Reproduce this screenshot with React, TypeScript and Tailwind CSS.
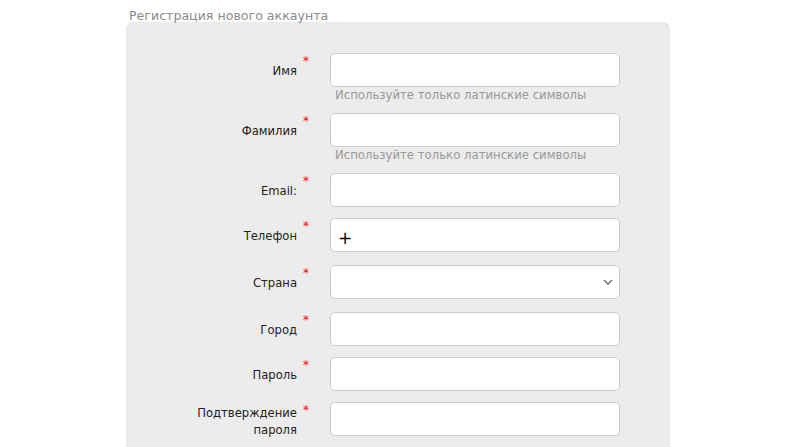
import React from 'react';

type Field = {
  label: React.ReactNode;
  hint?: string;
  kind?: 'text' | 'phone' | 'select';
  extra?: boolean;
};

const fields: Field[] = [
  { label: 'Имя', hint: 'Используйте только латинские символы' },
  { label: 'Фамилия', hint: 'Используйте только латинские символы' },
  { label: 'Email:' },
  { label: 'Телефон', kind: 'phone', extra: true },
  { label: 'Страна', kind: 'select', extra: true },
  { label: 'Город' },
  { label: 'Пароль' },
  {
    label: (
      <>
        Подтверждение
        <br />
        пароля
      </>
    ),
  },
];

const inputBox =
  'h-[34px] w-[290px] rounded-[5px] border border-[#cccccc] bg-white';

const FormRow = ({ field }: { field: Field }) => (
  <div className={`flex flex-col ${field.extra ? 'mb-[2px]' : ''}`}>
    <div className="flex items-stretch">
      <div className="flex w-[170px] items-center justify-end pt-[3px] text-right text-[11.6px] leading-[17px] text-[#222]">
        {field.label}
      </div>
      <div className="w-[33px] pl-[6px] pt-[2px] text-[12px] leading-none text-[#ff0000]">*</div>
      {field.kind === 'select' ? (
        <div className={`${inputBox} flex items-center justify-end pr-[6px]`}>
          <svg width="10" height="6" viewBox="0 0 10 6" fill="none">
            <path d="M1 1l4 4 4-4" stroke="#666" strokeWidth="1.3" />
          </svg>
        </div>
      ) : field.kind === 'phone' ? (
        <div className={`${inputBox} flex items-center pl-[7px] pt-[7px] text-[17px] text-black`}>+</div>
      ) : (
        <div className={inputBox} />
      )}
    </div>
    {field.hint && (
      <div className="ml-[208px] pt-[2px] text-[11.7px] leading-[13px] text-[#999999]">{field.hint}</div>
    )}
  </div>
);

export default function App() {
  return (
    <div className="min-h-[447px] bg-white pt-[8px] font-['DejaVu_Sans',Verdana,sans-serif]">
      <div className="ml-[127px] w-[542px]">
        <div className="pl-[2px] text-[12.6px] leading-[15px] text-[#8c8c8c]">Регистрация нового аккаунта</div>
        <div className="h-[430px] rounded-t-[6px] bg-[#ececec] pt-[30px] shadow-[0_0_2px_rgba(0,0,0,0.3)]">
          <div className="flex flex-col gap-[11px]">
            {fields.map((f, i) => (
              <FormRow key={i} field={f} />
            ))}
          </div>
        </div>
      </div>
    </div>
  );
}
